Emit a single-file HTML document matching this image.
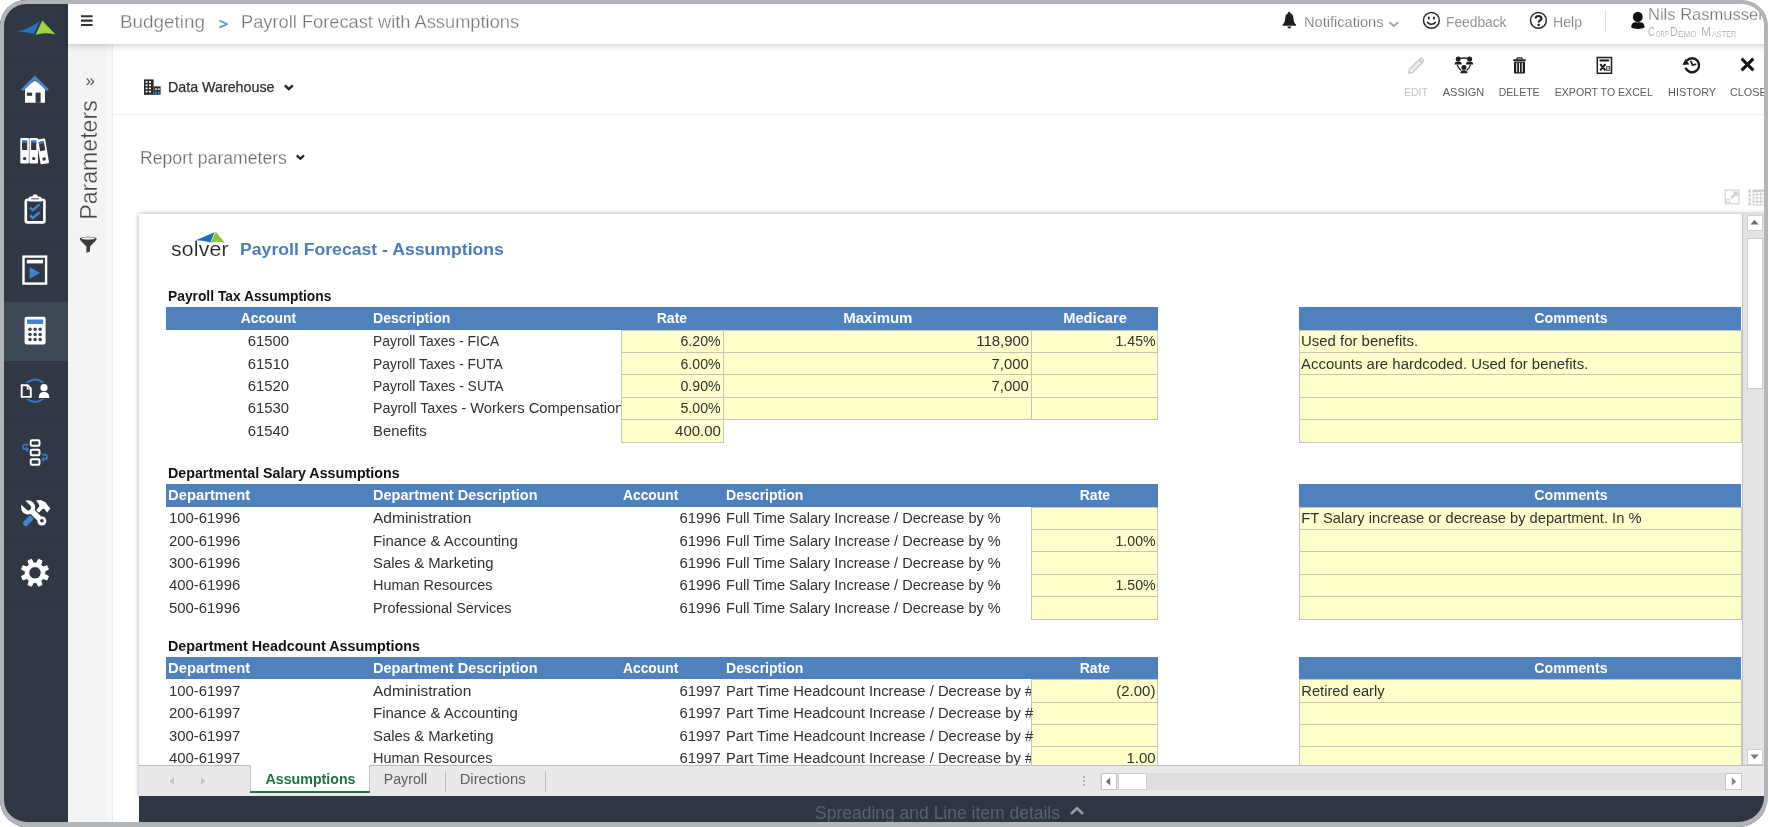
<!DOCTYPE html>
<html><head><meta charset="utf-8"><title>Payroll Forecast with Assumptions</title>
<style>
html,body{margin:0;padding:0}
body{width:1769px;height:827px;overflow:hidden;position:relative;background:#fff;font-family:"Liberation Sans",sans-serif}
.t{position:absolute;white-space:nowrap;display:block}
.b{position:absolute;box-sizing:border-box}
svg{position:absolute;overflow:visible}
#frame{position:absolute;left:0;top:0;width:1768.4px;height:827px;box-sizing:border-box;border:4.4px solid #b2b5ba;border-bottom-width:5.6px;border-radius:26px 26px 30px 27px;box-shadow:0 0 0 40px #fff;z-index:50}
</style></head><body><div id="root" style="position:absolute;left:0;top:0;width:1769px;height:827px;will-change:transform">
<div class="b" style="left:0.0px;top:0.0px;width:67.5px;height:827.0px;background:#2f3844;"></div>
<div class="b" style="left:0.0px;top:301.5px;width:67.5px;height:59.0px;background:#3d4957;"></div>
<div class="b" style="left:4.0px;top:58.5px;width:63.5px;height:1.0px;background:#2c343f;"></div>
<div class="b" style="left:4.0px;top:117.5px;width:63.5px;height:1.0px;background:#2c343f;"></div>
<div class="b" style="left:4.0px;top:178.5px;width:63.5px;height:1.0px;background:#2c343f;"></div>
<div class="b" style="left:4.0px;top:239.5px;width:63.5px;height:1.0px;background:#2c343f;"></div>
<div class="b" style="left:4.0px;top:422.0px;width:63.5px;height:1.0px;background:#2c343f;"></div>
<div class="b" style="left:4.0px;top:482.5px;width:63.5px;height:1.0px;background:#2c343f;"></div>
<div class="b" style="left:4.0px;top:543.0px;width:63.5px;height:1.0px;background:#2c343f;"></div>
<div class="b" style="left:4.0px;top:604.5px;width:63.5px;height:1.0px;background:#2c343f;"></div>
<svg style="left:14px;top:18px" width="44" height="20" viewBox="14 18 44 20">
<path d="M16.2 31.5 C23.5 30.2 32 26.8 40.1 21 L33.6 34.2 C28.5 32.2 22 31.4 16.2 31.5Z" fill="#2273c0"/>
<path d="M42.3 20.4 L55.4 34.5 C49 32.6 42 32.6 35.6 35 Z" fill="#9ed43a"/>
</svg>
<svg style="left:20px;top:74px" width="30" height="30" viewBox="20 74 30 30">
<path d="M25 87.5 L35 80.5 L45 87.5 V102.8 H25Z" fill="#fff"/>
<path d="M22 90.3 L34.8 77.6 L47.8 90.3" fill="none" stroke="#4a86cc" stroke-width="3" stroke-linejoin="miter"/>
<rect x="26.9" y="92.6" width="5.2" height="3.2" fill="#2f3844"/>
<rect x="35.6" y="92.6" width="5" height="10.2" fill="#2f3844"/>
</svg>
<svg style="left:19px;top:136px" width="33" height="30" viewBox="19 136 33 30">
<g fill="#fff"><rect x="20.3" y="138" width="8.6" height="25.5" rx="1"/><rect x="29.4" y="138" width="8.6" height="25.5" rx="1"/>
<rect x="40.6" y="138.6" width="8.6" height="25.2" rx="1" transform="rotate(-9.5 44.9 163.8)"/></g>
<g fill="#2f3844"><rect x="22" y="140.6" width="5.2" height="9.4"/><rect x="31.1" y="140.6" width="5.2" height="9.4"/>
<rect x="42.3" y="141.2" width="5.2" height="9.4" transform="rotate(-9.5 44.9 163.8)"/>
<circle cx="24.6" cy="158.6" r="1.7"/><circle cx="33.7" cy="158.6" r="1.7"/><circle cx="44.9" cy="158.9" r="1.7" transform="rotate(-9.5 44.9 163.8)"/></g>
<g fill="#3b78c0"><rect x="22" y="140.6" width="5.2" height="2.3"/><rect x="31.1" y="140.6" width="5.2" height="2.3"/><rect x="42.3" y="141.2" width="5.2" height="2.3" transform="rotate(-9.5 44.9 163.8)"/></g>
</svg>
<svg style="left:23px;top:192px" width="25" height="33" viewBox="23 192 25 33">
<rect x="25.8" y="199.8" width="18.6" height="22.6" rx="1.6" fill="none" stroke="#fff" stroke-width="2.6"/>
<path d="M28.6 201.6 V198.4 Q28.6 196.6 30.6 196.6 H32.2 A3 3 0 0 1 38 196.6 H39.6 Q41.6 196.6 41.6 198.4 V201.6Z" fill="#fff"/>
<rect x="31" y="198" width="8.2" height="1.5" rx="0.7" fill="#7c8591"/>
<path d="M30 207.6 L32.8 210.2 L39.6 204.4 M30 215.4 L32.8 218 L39.6 212.2" fill="none" stroke="#3f82cf" stroke-width="2.5"/>
</svg>
<svg style="left:21px;top:254px" width="28" height="32" viewBox="21 254 28 32">
<rect x="23.5" y="256.6" width="22.6" height="27" fill="none" stroke="#fff" stroke-width="2.4"/>
<rect x="26.8" y="259.8" width="16.2" height="3.6" fill="#fff"/>
<path d="M29.6 267 L40 272.9 L29.6 278.8Z" fill="#3f82cf"/>
</svg>
<svg style="left:23px;top:315px" width="25" height="31" viewBox="23 315 25 31">
<rect x="24.6" y="316.8" width="21" height="27.6" rx="2" fill="#fff"/>
<rect x="27" y="319.4" width="16.2" height="4.6" rx="0.8" fill="#3f82cf"/>
<g fill="#3a4450"><circle cx="30" cy="329.3" r="1.75"/><circle cx="35.1" cy="329.3" r="1.75"/><circle cx="40.2" cy="329.3" r="1.75"/>
<circle cx="30" cy="334.4" r="1.75"/><circle cx="35.1" cy="334.4" r="1.75"/><circle cx="40.2" cy="334.4" r="1.75"/>
<circle cx="30" cy="339.5" r="1.75"/><circle cx="35.1" cy="339.5" r="1.75"/><circle cx="40.2" cy="339.5" r="1.75"/></g>
</svg>
<svg style="left:19px;top:377px" width="33" height="28" viewBox="19 377 33 28">
<circle cx="35.2" cy="390.7" r="11.2" fill="none" stroke="#3b78c0" stroke-width="2"/>
<rect x="19.5" y="383" width="13.6" height="16" fill="#2f3844"/>
<rect x="37.4" y="383" width="13.6" height="16" fill="#2f3844"/>
<path d="M21.7 385.2 H27.6 L30.8 388.4 V396.9 H21.7Z" fill="none" stroke="#fff" stroke-width="1.9"/>
<path d="M27.3 385.2 V388.8 H30.8" fill="none" stroke="#fff" stroke-width="1.2"/>
<circle cx="44" cy="387.7" r="3.6" fill="#fff"/>
<path d="M38.8 397.9 C38.8 393.6 40.8 392 44 392 C47.2 392 49.3 393.6 49.3 397.9Z" fill="#fff"/>
</svg>
<svg style="left:21px;top:437px" width="28" height="32" viewBox="21 437 28 32">
<g fill="none" stroke="#fff" stroke-width="2"><rect x="30.7" y="440.2" width="8.8" height="5.6" rx="1.3"/><rect x="30.7" y="449.7" width="8.8" height="5.6" rx="1.3"/><rect x="30.7" y="459.2" width="8.8" height="5.6" rx="1.3"/></g>
<g fill="none" stroke="#3b78c0" stroke-width="1.8"><path d="M28.4 444.6 H25.4 A2.3 2.3 0 0 0 25.4 449.2 H26.8"/><path d="M26 447.2 L28.2 449.3 L26 451.4" stroke-width="1.5"/>
<path d="M41.8 454.6 H44.8 A2.3 2.3 0 0 1 44.8 459.2 H43.4"/><path d="M44.2 457.2 L42 459.3 L44.2 461.4" stroke-width="1.5"/></g>
</svg>
<svg style="left:19px;top:497px" width="33" height="31" viewBox="19 497 33 31">
<path d="M42.5 506.5 L31.5 517.5" stroke="#fff" stroke-width="3.6" fill="none"/>
<path d="M31 518 L25.7 523.3" stroke="#3f82cf" stroke-width="5.4" stroke-linecap="round" fill="none"/>
<path d="M35.9 500.6 L40.6 500.1 L45.5 502.2 L47.9 505.8 L50.4 508.5 L47.1 512.6 L44.1 508.8 L42.2 509 L38.9 511.8 L36.8 509.3 L39.5 506.3 L38.4 503.6Z" fill="#fff"/>
<circle cx="28.1" cy="507.4" r="8.1" fill="#2f3844"/>
<path d="M30 509.5 L41.9 521" stroke="#2f3844" stroke-width="7.6" stroke-linecap="round" fill="none"/>
<circle cx="41.9" cy="521" r="5.4" fill="#2f3844"/>
<circle cx="28.1" cy="507.4" r="7.1" fill="#fff"/>
<path d="M30 509.5 L41.9 521" stroke="#fff" stroke-width="5.6" fill="none"/>
<circle cx="41.9" cy="521" r="4.5" fill="#fff"/>
<circle cx="41.9" cy="520.8" r="1.8" fill="#2f3844"/>
<path d="M28.3 507.6 L18.6 497.9" stroke="#2f3844" stroke-width="5.6" stroke-linecap="round" fill="none"/>
</svg>
<svg style="left:20px;top:557px" width="30" height="30" viewBox="20 557 30 30"><path d="M36.63 563.03 L38.46 559.34 L42.08 560.84 L40.76 564.75 L43.05 567.04 L46.96 565.72 L48.46 569.34 L44.77 571.17 L44.77 574.43 L48.46 576.26 L46.96 579.88 L43.05 578.56 L40.76 580.85 L42.08 584.76 L38.46 586.26 L36.63 582.57 L33.37 582.57 L31.54 586.26 L27.92 584.76 L29.24 580.85 L26.95 578.56 L23.04 579.88 L21.54 576.26 L25.23 574.43 L25.23 571.17 L21.54 569.34 L23.04 565.72 L26.95 567.04 L29.24 564.75 L27.92 560.84 L31.54 559.34 L33.37 563.03Z M41.20 572.80 A6.2 6.2 0 1 0 28.80 572.80 A6.2 6.2 0 1 0 41.20 572.80Z" fill="#fff" fill-rule="evenodd" stroke="#fff" stroke-width="1.0" stroke-linejoin="round"/></svg>
<div class="b" style="left:67.5px;top:44.0px;width:45.5px;height:783.0px;background:#f4f4f4;border-right:1px solid #ececec"></div>
<div class="b" style="left:106.5px;top:44.0px;width:5.5px;height:783.0px;background:#f8f8f8;"></div>
<span class="t" style="left:85.5px;transform-origin:0 50%;top:69.5px;font-size:17px;line-height:22.1px;color:#555;">»</span>
<span class="t" style="left:89px;top:160px;font-size:23.1px;line-height:26px;color:#444;-webkit-text-stroke:0.3px #f4f4f4;transform:translate(-50%,-50%) rotate(-90deg) scaleX(1.0)">Parameters</span>
<svg style="left:79px;top:235px" width="19" height="19" viewBox="79 235 19 19">
<path d="M79.8 238.7 C79.8 236 96.7 236 96.7 238.7 C96.7 240.2 93.6 242.4 90 246.6 V251.6 L86.4 252.7 V246.6 C82.8 242.4 79.8 240.2 79.8 238.7Z" fill="#3a3a3a"/>
<ellipse cx="88.25" cy="238.4" rx="6.7" ry="1.1" fill="#f6f6f6"/></svg>
<div class="b" style="left:113.0px;top:44.0px;width:1656.0px;height:783.0px;background:#fff;"></div>
<div class="b" style="left:113.0px;top:114.2px;width:1656.0px;height:1.0px;background:#efefef;"></div>
<div class="b" style="left:67.5px;top:0.0px;width:1701.5px;height:44.3px;background:#fff;box-shadow:0 1px 7px rgba(0,0,0,.24);z-index:5"></div>
<div style="position:absolute;left:0;top:0;z-index:6">
<svg style="left:81.4px;top:15.4px" width="12" height="12" viewBox="0 0 12 12"><path d="M0 1.2H11.6M0 5.6H11.6M0 10H11.6" stroke="#333" stroke-width="2.1"/></svg>
<span class="t" style="left:120.0px;transform-origin:0 50%;top:10.4px;font-size:18.4px;line-height:23.9px;color:#737373;transform:scaleX(1.026);-webkit-text-stroke:0.3px #fff;">Budgeting</span>
<span class="t" style="left:218.6px;transform-origin:0 50%;top:14.1px;font-size:15.5px;line-height:20.2px;color:#3d8edb;transform:scaleX(0.993);-webkit-text-stroke:0.5px #3d8edb;">&gt;</span>
<span class="t" style="left:241.0px;transform-origin:0 50%;top:10.4px;font-size:18.4px;line-height:23.9px;color:#737373;transform:scaleX(0.993);-webkit-text-stroke:0.3px #fff;">Payroll Forecast with Assumptions</span>
<svg style="left:1282px;top:11px" width="15" height="19" viewBox="0 0 15 19">
<path d="M7.2 0.8 C8 0.8 8.5 1.5 8.3 2.3 C10.6 3 11.4 5.2 11.5 7.8 C11.6 10.8 12.4 12.4 14 13.6 V14.8 H0.6 V13.6 C2.2 12.4 3 10.8 3.1 7.8 C3.2 5.2 4 3 6.1 2.3 C5.9 1.5 6.4 0.8 7.2 0.8Z" fill="#1f1f1f"/>
<path d="M5.4 15.6 H9.2 A1.9 1.9 0 0 1 5.4 15.6Z" fill="#1f1f1f"/></svg>
<span class="t" style="left:1304.0px;transform-origin:0 50%;top:12.9px;font-size:14.6px;line-height:19.0px;color:#6c6c6c;-webkit-text-stroke:0.25px #fff;">Notifications</span>
<svg style="left:1388px;top:21px" width="12" height="8" viewBox="0 0 12 8"><path d="M1.4 1.2 L5.8 5 L10.2 1.2" fill="none" stroke="#a4a4a4" stroke-width="1.9"/></svg>
<svg style="left:1422px;top:11px" width="19" height="19" viewBox="0 0 19 19">
<circle cx="9.4" cy="9.4" r="7.9" fill="none" stroke="#2b2b2b" stroke-width="1.5"/>
<ellipse cx="6.8" cy="7" rx="1.05" ry="1.5" fill="#1f1f1f"/><ellipse cx="12" cy="7" rx="1.05" ry="1.5" fill="#1f1f1f"/>
<path d="M5.2 10.8 C6.6 14 12.2 14 13.6 10.8" fill="none" stroke="#1f1f1f" stroke-width="1.5"/></svg>
<span class="t" style="left:1446.0px;transform-origin:0 50%;top:12.9px;font-size:14.6px;line-height:19.0px;color:#6c6c6c;transform:scaleX(0.944);-webkit-text-stroke:0.25px #fff;">Feedback</span>
<svg style="left:1529px;top:11px" width="19" height="19" viewBox="0 0 19 19">
<circle cx="9.4" cy="9.4" r="7.9" fill="none" stroke="#2b2b2b" stroke-width="1.5"/>
<path d="M6.6 7.4 C6.6 4.2 12.4 4.2 12.4 7.4 C12.4 9.4 9.6 9.2 9.6 11.6" fill="none" stroke="#1f1f1f" stroke-width="2.1"/>
<circle cx="9.6" cy="14" r="1.25" fill="#1f1f1f"/></svg>
<span class="t" style="left:1553.0px;transform-origin:0 50%;top:12.9px;font-size:14.6px;line-height:19.0px;color:#6c6c6c;transform:scaleX(0.966);-webkit-text-stroke:0.25px #fff;">Help</span>
<div class="b" style="left:1605.0px;top:10.0px;width:1.0px;height:22.0px;background:#dcdcdc;"></div>
<svg style="left:1630px;top:11px" width="16" height="19" viewBox="1630 11 16 19">
<ellipse cx="1637.8" cy="16.9" rx="4.9" ry="5.2" fill="#111"/>
<path d="M1631.2 27.6 C1631.2 23.4 1633.6 21.6 1637.8 22.6 C1642 21.6 1644.6 23.4 1644.6 27.6 C1642 29.4 1633.8 29.4 1631.2 27.6Z" fill="#111"/></svg>
<span class="t" style="left:1648.0px;transform-origin:0 50%;top:5.3px;font-size:16px;line-height:20.8px;color:#6e6e6e;transform:scaleX(1.034);-webkit-text-stroke:0.28px #fff;">Nils Rasmussen</span>
<span class="t" style="left:1648.2px;transform-origin:0 50%;top:25.4px;font-size:12.2px;line-height:15.9px;color:#ababab;transform:scaleX(0.772);-webkit-text-stroke:0.12px #fff;">C</span>
<span class="t" style="left:1655.6px;transform-origin:0 50%;top:29.0px;font-size:8.6px;line-height:11.2px;color:#ababab;transform:scaleX(0.687);-webkit-text-stroke:0.12px #fff;">ORP</span>
<span class="t" style="left:1669.7px;transform-origin:0 50%;top:25.4px;font-size:12.2px;line-height:15.9px;color:#ababab;transform:scaleX(0.862);-webkit-text-stroke:0.12px #fff;">D</span>
<span class="t" style="left:1678.2px;transform-origin:0 50%;top:29.0px;font-size:8.6px;line-height:11.2px;color:#ababab;transform:scaleX(0.945);-webkit-text-stroke:0.12px #fff;">EMO</span>
<span class="t" style="left:1701.3px;transform-origin:0 50%;top:25.4px;font-size:12.2px;line-height:15.9px;color:#ababab;transform:scaleX(0.994);-webkit-text-stroke:0.12px #fff;">M</span>
<span class="t" style="left:1712.0px;transform-origin:0 50%;top:29.0px;font-size:8.6px;line-height:11.2px;color:#ababab;transform:scaleX(0.848);-webkit-text-stroke:0.12px #fff;">ASTER</span>
</div>
<svg style="left:143px;top:78px" width="19" height="19" viewBox="0 0 19 19">
<path d="M1 1.4 H10.6 V16.8 H1Z" fill="#2b2b2b"/>
<path d="M10.6 8.4 H17.6 V16.8 H10.6Z" fill="#2b2b2b"/>
<g fill="#fff"><rect x="2.6" y="3.2" width="2" height="1.6"/><rect x="6" y="3.2" width="2" height="1.6"/><rect x="2.6" y="6.4" width="2" height="1.6"/><rect x="6" y="6.4" width="2" height="1.6"/>
<rect x="2.6" y="9.6" width="2" height="1.6"/><rect x="6" y="9.6" width="2" height="1.6"/><rect x="2.6" y="12.8" width="2" height="1.6"/><rect x="6" y="12.8" width="2" height="1.6"/>
<rect x="12" y="10.4" width="1.8" height="1.5"/><rect x="14.8" y="10.4" width="1.8" height="1.5"/></g>
<rect x="11.8" y="13.4" width="2" height="3.4" fill="#3b78c0"/><rect x="14.8" y="13.4" width="2" height="3.4" fill="#3b78c0"/>
</svg>
<span class="t" style="left:168.0px;transform-origin:0 50%;top:77.8px;font-size:14.2px;line-height:18.5px;color:#2e2e2e;transform:scaleX(1.005);-webkit-text-stroke:0.25px #2e2e2e;">Data Warehouse</span>
<svg style="left:283px;top:84px" width="12" height="8" viewBox="0 0 12 8"><path d="M1.8 1.4 L5.8 5.2 L9.8 1.4" fill="none" stroke="#222" stroke-width="2.3"/></svg>
<span class="t" style="left:1403.0px;transform-origin:50% 50%;top:84.6px;font-size:11.4px;line-height:14.8px;color:#c4c4c4;transform:scaleX(0.925);">EDIT</span>
<span class="t" style="left:1442.0px;transform-origin:50% 50%;top:84.6px;font-size:11.4px;line-height:14.8px;color:#5b5b5b;transform:scaleX(0.964);">ASSIGN</span>
<span class="t" style="left:1497.3px;transform-origin:50% 50%;top:84.6px;font-size:11.4px;line-height:14.8px;color:#5b5b5b;transform:scaleX(0.925);">DELETE</span>
<span class="t" style="left:1551.2px;transform-origin:50% 50%;top:84.6px;font-size:11.4px;line-height:14.8px;color:#5b5b5b;transform:scaleX(0.929);">EXPORT TO EXCEL</span>
<span class="t" style="left:1666.9px;transform-origin:50% 50%;top:84.6px;font-size:11.4px;line-height:14.8px;color:#5b5b5b;transform:scaleX(0.956);">HISTORY</span>
<span class="t" style="left:1729.0px;transform-origin:50% 50%;top:84.6px;font-size:11.4px;line-height:14.8px;color:#5b5b5b;transform:scaleX(0.948);">CLOSE</span>
<svg style="left:1407px;top:57px" width="18" height="18" viewBox="0 0 18 18">
<path d="M2.4 12.2 L11.6 3 L14.8 6.2 L5.6 15.4 L1.6 16.2Z M12.4 2.2 L13.4 1.2 Q14.2 0.6 15 1.4 L16.4 2.8 Q17 3.6 16.4 4.4 L15.6 5.4Z" fill="#f4f4f4" stroke="#c6c6c6" stroke-width="1.2"/>
<path d="M4.2 12.2 L11.6 4.8 M5.8 13.8 L13.2 6.4" stroke="#d2d2d2" stroke-width="0.9"/></svg>
<svg style="left:1454px;top:56px" width="20" height="19" viewBox="0 0 20 19">
<g fill="#1d1d1d"><circle cx="4.2" cy="3" r="2.5"/><circle cx="15.6" cy="3" r="2.5"/><circle cx="9.9" cy="11.6" r="2.5"/>
<path d="M0.6 8.6 C0.6 6.2 2 5.6 4.2 5.6 C6.4 5.6 7.8 6.2 7.8 8.6Z"/><path d="M12 8.6 C12 6.2 13.4 5.6 15.6 5.6 C17.8 5.6 19.2 6.2 19.2 8.6Z"/>
<path d="M6.3 17.3 C6.3 14.9 7.7 14.2 9.9 14.2 C12.1 14.2 13.5 14.9 13.5 17.3Z"/></g>
<path d="M6 2.4 Q9.9 1.6 13.8 2.4 M3.2 8.8 Q4.4 12.4 7.2 14.4 M16.6 8.8 Q15.4 12.4 12.6 14.4" stroke="#1d1d1d" stroke-width="1.3" fill="none"/></svg>
<svg style="left:1512px;top:57px" width="15" height="18" viewBox="0 0 15 18">
<path d="M5 2.4 V1.4 Q5 0.8 5.8 0.8 H9.2 Q10 0.8 10 1.4 V2.4" fill="none" stroke="#1d1d1d" stroke-width="1.3"/>
<rect x="1.2" y="2.2" width="12.6" height="2" rx="0.6" fill="#1d1d1d"/>
<path d="M2 4.8 H13 V15.4 Q13 16.6 11.8 16.6 H3.2 Q2 16.6 2 15.4Z" fill="#1d1d1d"/>
<path d="M4.7 5.8 V15.2 M7.5 5.8 V15.2 M10.3 5.8 V15.2" stroke="#e8e8e8" stroke-width="1.1"/></svg>
<svg style="left:1596px;top:56px" width="17" height="19" viewBox="0 0 17 19">
<rect x="1.3" y="1.5" width="14.2" height="15.8" fill="#fff" stroke="#1d1d1d" stroke-width="1.5"/>
<rect x="3.6" y="3.4" width="9.6" height="2.1" fill="#1d1d1d"/>
<path d="M4.2 8.2 L9.4 14.4 M9.4 8.2 L4.2 14.4" stroke="#1d1d1d" stroke-width="2.1"/>
<rect x="10.6" y="10.6" width="3.2" height="3.8" fill="#bbb" stroke="#333" stroke-width="0.8"/></svg>
<svg style="left:1682px;top:55px" width="20" height="20" viewBox="0 0 20 20">
<path d="M4.9 5.6 A7 7 0 1 1 3.5 12.6" fill="none" stroke="#1d1d1d" stroke-width="2.4"/>
<path d="M0.4 10 L7.4 9.4 L3.6 3.8Z" fill="#1d1d1d"/>
<path d="M8.6 5.8 L10.6 10.2 L14.4 9" fill="none" stroke="#1d1d1d" stroke-width="1.7"/></svg>
<svg style="left:1740px;top:57px" width="15" height="15" viewBox="0 0 15 15"><path d="M1.6 1.6 L13.4 13.4 M13.4 1.6 L1.6 13.4" stroke="#111" stroke-width="3"/></svg>
<span class="t" style="left:140.0px;transform-origin:0 50%;top:146.7px;font-size:18px;line-height:23.4px;color:#606060;transform:scaleX(0.979);-webkit-text-stroke:0.3px #fff;">Report parameters</span>
<svg style="left:295px;top:154px" width="11" height="8" viewBox="0 0 11 8"><path d="M1.8 1.4 L5.4 4.8 L9 1.4" fill="none" stroke="#222" stroke-width="2.2"/></svg>
<svg style="left:1724px;top:189px" width="16" height="16" viewBox="0 0 16 16">
<rect x="1.2" y="1.2" width="13.6" height="13.6" fill="none" stroke="#d6d6d6" stroke-width="1.3"/>
<path d="M7.4 8.8 L11.4 4.8" stroke="#cfcfcf" stroke-width="2.6"/>
<path d="M8.4 2.6 H13.6 V7.8Z" fill="#cfcfcf"/>
<rect x="2.6" y="10.2" width="3.2" height="3.2" fill="none" stroke="#d6d6d6" stroke-width="1"/></svg>
<svg style="left:1748px;top:188.5px" width="18" height="17" viewBox="0 0 18 17">
<path d="M1.6 0.6 V16.4" stroke="#cdcdcd" stroke-width="2.3" stroke-dasharray="3.2 1"/>
<rect x="4.6" y="0.6" width="13.4" height="2.2" fill="#c9c9c9"/>
<path d="M4.6 5.4 H18 M4.6 9 H18 M4.6 12.6 H18 M4.6 16 H18 M5.2 2 V16 M9 3 V16 M12.8 3 V16 M16.6 3 V16" stroke="#d2d2d2" stroke-width="1.2" fill="none"/></svg>
<div class="b" style="left:139.0px;top:214.0px;width:1626.0px;height:583.0px;background:#fff;box-shadow:0 0 5px rgba(0,0,0,.34);overflow:hidden"></div>
<div style="position:absolute;left:0;top:0;width:1765px;height:766px;overflow:hidden">
<svg style="left:194px;top:230.3px" width="32" height="14" viewBox="192 230 32 14">
<path d="M193.2 240.6 L212.6 232.2 L208.4 242.6 C203.6 241 198.4 240.4 193.2 240.6Z" fill="#1f6fb8"/>
<path d="M213.8 231.8 L222.8 242.8 C218 241.4 213.2 241.4 208.6 242.8 Z" fill="#8cc63f"/></svg>
<span class="t" style="left:170.8px;transform-origin:0 50%;top:236.8px;font-size:19.5px;line-height:25.4px;color:#1e1e1e;transform:scaleX(1.088);letter-spacing:0.2px;-webkit-text-stroke:0.15px #fff;">solver</span>
<span class="t" style="left:240.0px;transform-origin:0 50%;top:237.8px;font-size:17.2px;line-height:22.4px;color:#4a7dbd;font-weight:bold;transform:scaleX(1.026);">Payroll Forecast - Assumptions</span>
<span class="t" style="left:168.3px;transform-origin:0 50%;top:286.9px;font-size:14.7px;line-height:19.1px;color:#111;font-weight:bold;transform:scaleX(0.940);">Payroll Tax Assumptions</span>
<div class="b" style="left:166.0px;top:306.7px;width:991.6px;height:23.0px;background:#4f81bd;"></div>
<div class="b" style="left:1299.0px;top:306.7px;width:442.0px;height:23.0px;background:#4f81bd;"></div>
<span class="t" style="left:239.1px;transform-origin:50% 50%;top:309.2px;font-size:14.7px;line-height:19.1px;color:#fff;font-weight:bold;transform:scaleX(0.941);">Account</span>
<span class="t" style="left:372.5px;transform-origin:0 50%;top:309.2px;font-size:14.7px;line-height:19.1px;color:#fff;font-weight:bold;transform:scaleX(0.958);">Description</span>
<span class="t" style="left:656.4px;transform-origin:50% 50%;top:309.2px;font-size:14.7px;line-height:19.1px;color:#fff;font-weight:bold;transform:scaleX(0.958);">Rate</span>
<span class="t" style="left:843.6px;transform-origin:50% 50%;top:309.2px;font-size:14.7px;line-height:19.1px;color:#fff;font-weight:bold;transform:scaleX(1.021);">Maximum</span>
<span class="t" style="left:1063.2px;transform-origin:50% 50%;top:309.2px;font-size:14.7px;line-height:19.1px;color:#fff;font-weight:bold;">Medicare</span>
<span class="t" style="left:1533.0px;transform-origin:50% 50%;top:309.2px;font-size:14.7px;line-height:19.1px;color:#fff;font-weight:bold;transform:scaleX(0.968);">Comments</span>
<span class="t" style="left:248.1px;transform-origin:50% 50%;top:332.2px;font-size:14.7px;line-height:19.1px;color:#303030;transform:scaleX(1.014);">61500</span>
<span class="t" style="left:372.5px;transform-origin:0 50%;top:332.2px;font-size:14.7px;line-height:19.1px;color:#303030;transform:scaleX(0.945);">Payroll Taxes - FICA</span>
<div class="b" style="left:621.4px;top:329.6px;width:102.6px;height:23.4px;background:#ffffcc;border:1px solid #c5c5b9"></div>
<span class="t" style="left:678.8px;transform-origin:100% 50%;top:332.2px;font-size:14.7px;line-height:19.1px;color:#303030;transform:scaleX(0.965);">6.20%</span>
<div class="b" style="left:723.0px;top:329.6px;width:309.0px;height:23.4px;background:#ffffcc;border:1px solid #c5c5b9"></div>
<span class="t" style="left:976.6px;transform-origin:100% 50%;top:332.2px;font-size:14.7px;line-height:19.1px;color:#303030;transform:scaleX(1.015);">118,900</span>
<div class="b" style="left:1031.0px;top:329.6px;width:126.6px;height:23.4px;background:#ffffcc;border:1px solid #c5c5b9"></div>
<span class="t" style="left:1113.5px;transform-origin:100% 50%;top:332.2px;font-size:14.7px;line-height:19.1px;color:#303030;transform:scaleX(0.965);">1.45%</span>
<div class="b" style="left:1299.0px;top:329.6px;width:443.0px;height:23.4px;background:#ffffcc;border:1px solid #c5c5b9"></div>
<span class="t" style="left:1301.3px;transform-origin:0 50%;top:332.2px;font-size:14.7px;line-height:19.1px;color:#303030;transform:scaleX(1.017);">Used for benefits.</span>
<span class="t" style="left:248.1px;transform-origin:50% 50%;top:354.6px;font-size:14.7px;line-height:19.1px;color:#303030;transform:scaleX(1.014);">61510</span>
<span class="t" style="left:372.5px;transform-origin:0 50%;top:354.6px;font-size:14.7px;line-height:19.1px;color:#303030;transform:scaleX(0.945);">Payroll Taxes - FUTA</span>
<div class="b" style="left:621.4px;top:352.0px;width:102.6px;height:23.4px;background:#ffffcc;border:1px solid #c5c5b9"></div>
<span class="t" style="left:678.8px;transform-origin:100% 50%;top:354.6px;font-size:14.7px;line-height:19.1px;color:#303030;transform:scaleX(0.965);">6.00%</span>
<div class="b" style="left:723.0px;top:352.0px;width:309.0px;height:23.4px;background:#ffffcc;border:1px solid #c5c5b9"></div>
<span class="t" style="left:991.8px;transform-origin:100% 50%;top:354.6px;font-size:14.7px;line-height:19.1px;color:#303030;transform:scaleX(1.015);">7,000</span>
<div class="b" style="left:1031.0px;top:352.0px;width:126.6px;height:23.4px;background:#ffffcc;border:1px solid #c5c5b9"></div>
<div class="b" style="left:1299.0px;top:352.0px;width:443.0px;height:23.4px;background:#ffffcc;border:1px solid #c5c5b9"></div>
<span class="t" style="left:1301.3px;transform-origin:0 50%;top:354.6px;font-size:14.7px;line-height:19.1px;color:#303030;transform:scaleX(1.017);">Accounts are hardcoded. Used for benefits.</span>
<span class="t" style="left:248.1px;transform-origin:50% 50%;top:376.9px;font-size:14.7px;line-height:19.1px;color:#303030;transform:scaleX(1.014);">61520</span>
<span class="t" style="left:372.5px;transform-origin:0 50%;top:376.9px;font-size:14.7px;line-height:19.1px;color:#303030;transform:scaleX(0.945);">Payroll Taxes - SUTA</span>
<div class="b" style="left:621.4px;top:374.4px;width:102.6px;height:23.4px;background:#ffffcc;border:1px solid #c5c5b9"></div>
<span class="t" style="left:678.8px;transform-origin:100% 50%;top:376.9px;font-size:14.7px;line-height:19.1px;color:#303030;transform:scaleX(0.965);">0.90%</span>
<div class="b" style="left:723.0px;top:374.4px;width:309.0px;height:23.4px;background:#ffffcc;border:1px solid #c5c5b9"></div>
<span class="t" style="left:991.8px;transform-origin:100% 50%;top:376.9px;font-size:14.7px;line-height:19.1px;color:#303030;transform:scaleX(1.015);">7,000</span>
<div class="b" style="left:1031.0px;top:374.4px;width:126.6px;height:23.4px;background:#ffffcc;border:1px solid #c5c5b9"></div>
<div class="b" style="left:1299.0px;top:374.4px;width:443.0px;height:23.4px;background:#ffffcc;border:1px solid #c5c5b9"></div>
<span class="t" style="left:248.1px;transform-origin:50% 50%;top:399.3px;font-size:14.7px;line-height:19.1px;color:#303030;transform:scaleX(1.014);">61530</span>
<span class="t" style="left:372.5px;transform-origin:0 50%;top:399.3px;font-size:14.7px;line-height:19.1px;color:#303030;transform:scaleX(0.970);">Payroll Taxes -</span>
<span class="t" style="left:470.2px;transform-origin:0 50%;top:399.3px;font-size:14.7px;line-height:19.1px;color:#303030;">Workers Compensation</span>
<div class="b" style="left:621.4px;top:396.8px;width:102.6px;height:23.4px;background:#ffffcc;border:1px solid #c5c5b9"></div>
<span class="t" style="left:678.8px;transform-origin:100% 50%;top:399.3px;font-size:14.7px;line-height:19.1px;color:#303030;transform:scaleX(0.965);">5.00%</span>
<div class="b" style="left:723.0px;top:396.8px;width:309.0px;height:23.4px;background:#ffffcc;border:1px solid #c5c5b9"></div>
<div class="b" style="left:1031.0px;top:396.8px;width:126.6px;height:23.4px;background:#ffffcc;border:1px solid #c5c5b9"></div>
<div class="b" style="left:1299.0px;top:396.8px;width:443.0px;height:23.4px;background:#ffffcc;border:1px solid #c5c5b9"></div>
<span class="t" style="left:248.1px;transform-origin:50% 50%;top:421.7px;font-size:14.7px;line-height:19.1px;color:#303030;transform:scaleX(1.014);">61540</span>
<span class="t" style="left:372.5px;transform-origin:0 50%;top:421.7px;font-size:14.7px;line-height:19.1px;color:#303030;transform:scaleX(1.010);">Benefits</span>
<div class="b" style="left:621.4px;top:419.2px;width:102.6px;height:23.4px;background:#ffffcc;border:1px solid #c5c5b9"></div>
<span class="t" style="left:675.6px;transform-origin:100% 50%;top:421.7px;font-size:14.7px;line-height:19.1px;color:#303030;transform:scaleX(1.020);">400.00</span>
<div class="b" style="left:1299.0px;top:419.2px;width:443.0px;height:23.4px;background:#ffffcc;border:1px solid #c5c5b9"></div>
<span class="t" style="left:168.3px;transform-origin:0 50%;top:464.1px;font-size:14.7px;line-height:19.1px;color:#111;font-weight:bold;transform:scaleX(0.971);">Departmental Salary Assumptions</span>
<div class="b" style="left:166.0px;top:483.9px;width:991.6px;height:22.8px;background:#4f81bd;"></div>
<div class="b" style="left:1299.0px;top:483.9px;width:442.0px;height:22.8px;background:#4f81bd;"></div>
<span class="t" style="left:168.3px;transform-origin:0 50%;top:486.4px;font-size:14.7px;line-height:19.1px;color:#fff;font-weight:bold;transform:scaleX(1.006);">Department</span>
<span class="t" style="left:372.5px;transform-origin:0 50%;top:486.4px;font-size:14.7px;line-height:19.1px;color:#fff;font-weight:bold;transform:scaleX(0.988);">Department Description</span>
<span class="t" style="left:623.3px;transform-origin:0 50%;top:486.4px;font-size:14.7px;line-height:19.1px;color:#fff;font-weight:bold;transform:scaleX(0.941);">Account</span>
<span class="t" style="left:725.5px;transform-origin:0 50%;top:486.4px;font-size:14.7px;line-height:19.1px;color:#fff;font-weight:bold;transform:scaleX(0.958);">Description</span>
<span class="t" style="left:1079.1px;transform-origin:50% 50%;top:486.4px;font-size:14.7px;line-height:19.1px;color:#fff;font-weight:bold;transform:scaleX(0.958);">Rate</span>
<span class="t" style="left:1533.0px;transform-origin:50% 50%;top:486.4px;font-size:14.7px;line-height:19.1px;color:#fff;font-weight:bold;transform:scaleX(0.968);">Comments</span>
<span class="t" style="left:168.6px;transform-origin:0 50%;top:509.2px;font-size:14.7px;line-height:19.1px;color:#303030;transform:scaleX(1.014);">100-61996</span>
<span class="t" style="left:372.5px;transform-origin:0 50%;top:509.2px;font-size:14.7px;line-height:19.1px;color:#303030;transform:scaleX(1.057);">Administration</span>
<span class="t" style="left:680.2px;transform-origin:100% 50%;top:509.2px;font-size:14.7px;line-height:19.1px;color:#303030;transform:scaleX(1.014);">61996</span>
<span class="t" style="left:725.5px;transform-origin:0 50%;top:509.2px;font-size:14.7px;line-height:19.1px;color:#303030;transform:scaleX(0.990);">Full Time Salary Increase / Decrease by %</span>
<div class="b" style="left:1031.0px;top:506.6px;width:126.6px;height:23.4px;background:#ffffcc;border:1px solid #c5c5b9"></div>
<div class="b" style="left:1299.0px;top:506.6px;width:443.0px;height:23.4px;background:#ffffcc;border:1px solid #c5c5b9"></div>
<span class="t" style="left:1301.3px;transform-origin:0 50%;top:509.2px;font-size:14.7px;line-height:19.1px;color:#303030;">FT Salary increase or decrease by department. In %</span>
<span class="t" style="left:168.6px;transform-origin:0 50%;top:531.6px;font-size:14.7px;line-height:19.1px;color:#303030;transform:scaleX(1.014);">200-61996</span>
<span class="t" style="left:372.5px;transform-origin:0 50%;top:531.6px;font-size:14.7px;line-height:19.1px;color:#303030;transform:scaleX(1.019);">Finance &amp; Accounting</span>
<span class="t" style="left:680.2px;transform-origin:100% 50%;top:531.6px;font-size:14.7px;line-height:19.1px;color:#303030;transform:scaleX(1.014);">61996</span>
<span class="t" style="left:725.5px;transform-origin:0 50%;top:531.6px;font-size:14.7px;line-height:19.1px;color:#303030;transform:scaleX(0.990);">Full Time Salary Increase / Decrease by %</span>
<div class="b" style="left:1031.0px;top:529.0px;width:126.6px;height:23.4px;background:#ffffcc;border:1px solid #c5c5b9"></div>
<span class="t" style="left:1113.5px;transform-origin:100% 50%;top:531.6px;font-size:14.7px;line-height:19.1px;color:#303030;transform:scaleX(0.965);">1.00%</span>
<div class="b" style="left:1299.0px;top:529.0px;width:443.0px;height:23.4px;background:#ffffcc;border:1px solid #c5c5b9"></div>
<span class="t" style="left:168.6px;transform-origin:0 50%;top:554.0px;font-size:14.7px;line-height:19.1px;color:#303030;transform:scaleX(1.014);">300-61996</span>
<span class="t" style="left:372.5px;transform-origin:0 50%;top:554.0px;font-size:14.7px;line-height:19.1px;color:#303030;transform:scaleX(1.010);">Sales &amp; Marketing</span>
<span class="t" style="left:680.2px;transform-origin:100% 50%;top:554.0px;font-size:14.7px;line-height:19.1px;color:#303030;transform:scaleX(1.014);">61996</span>
<span class="t" style="left:725.5px;transform-origin:0 50%;top:554.0px;font-size:14.7px;line-height:19.1px;color:#303030;transform:scaleX(0.990);">Full Time Salary Increase / Decrease by %</span>
<div class="b" style="left:1031.0px;top:551.4px;width:126.6px;height:23.4px;background:#ffffcc;border:1px solid #c5c5b9"></div>
<div class="b" style="left:1299.0px;top:551.4px;width:443.0px;height:23.4px;background:#ffffcc;border:1px solid #c5c5b9"></div>
<span class="t" style="left:168.6px;transform-origin:0 50%;top:576.4px;font-size:14.7px;line-height:19.1px;color:#303030;transform:scaleX(1.014);">400-61996</span>
<span class="t" style="left:372.5px;transform-origin:0 50%;top:576.4px;font-size:14.7px;line-height:19.1px;color:#303030;transform:scaleX(0.982);">Human Resources</span>
<span class="t" style="left:680.2px;transform-origin:100% 50%;top:576.4px;font-size:14.7px;line-height:19.1px;color:#303030;transform:scaleX(1.014);">61996</span>
<span class="t" style="left:725.5px;transform-origin:0 50%;top:576.4px;font-size:14.7px;line-height:19.1px;color:#303030;transform:scaleX(0.990);">Full Time Salary Increase / Decrease by %</span>
<div class="b" style="left:1031.0px;top:573.8px;width:126.6px;height:23.4px;background:#ffffcc;border:1px solid #c5c5b9"></div>
<span class="t" style="left:1113.5px;transform-origin:100% 50%;top:576.4px;font-size:14.7px;line-height:19.1px;color:#303030;transform:scaleX(0.965);">1.50%</span>
<div class="b" style="left:1299.0px;top:573.8px;width:443.0px;height:23.4px;background:#ffffcc;border:1px solid #c5c5b9"></div>
<span class="t" style="left:168.6px;transform-origin:0 50%;top:598.8px;font-size:14.7px;line-height:19.1px;color:#303030;transform:scaleX(1.014);">500-61996</span>
<span class="t" style="left:372.5px;transform-origin:0 50%;top:598.8px;font-size:14.7px;line-height:19.1px;color:#303030;transform:scaleX(0.980);">Professional Services</span>
<span class="t" style="left:680.2px;transform-origin:100% 50%;top:598.8px;font-size:14.7px;line-height:19.1px;color:#303030;transform:scaleX(1.014);">61996</span>
<span class="t" style="left:725.5px;transform-origin:0 50%;top:598.8px;font-size:14.7px;line-height:19.1px;color:#303030;transform:scaleX(0.990);">Full Time Salary Increase / Decrease by %</span>
<div class="b" style="left:1031.0px;top:596.2px;width:126.6px;height:23.4px;background:#ffffcc;border:1px solid #c5c5b9"></div>
<div class="b" style="left:1299.0px;top:596.2px;width:443.0px;height:23.4px;background:#ffffcc;border:1px solid #c5c5b9"></div>
<span class="t" style="left:168.3px;transform-origin:0 50%;top:636.7px;font-size:14.7px;line-height:19.1px;color:#111;font-weight:bold;transform:scaleX(0.976);">Department Headcount Assumptions</span>
<div class="b" style="left:166.0px;top:656.5px;width:991.6px;height:22.8px;background:#4f81bd;"></div>
<div class="b" style="left:1299.0px;top:656.5px;width:442.0px;height:22.8px;background:#4f81bd;"></div>
<span class="t" style="left:168.3px;transform-origin:0 50%;top:659.1px;font-size:14.7px;line-height:19.1px;color:#fff;font-weight:bold;transform:scaleX(1.006);">Department</span>
<span class="t" style="left:372.5px;transform-origin:0 50%;top:659.1px;font-size:14.7px;line-height:19.1px;color:#fff;font-weight:bold;transform:scaleX(0.988);">Department Description</span>
<span class="t" style="left:623.3px;transform-origin:0 50%;top:659.1px;font-size:14.7px;line-height:19.1px;color:#fff;font-weight:bold;transform:scaleX(0.941);">Account</span>
<span class="t" style="left:725.5px;transform-origin:0 50%;top:659.1px;font-size:14.7px;line-height:19.1px;color:#fff;font-weight:bold;transform:scaleX(0.958);">Description</span>
<span class="t" style="left:1079.1px;transform-origin:50% 50%;top:659.1px;font-size:14.7px;line-height:19.1px;color:#fff;font-weight:bold;transform:scaleX(0.958);">Rate</span>
<span class="t" style="left:1533.0px;transform-origin:50% 50%;top:659.1px;font-size:14.7px;line-height:19.1px;color:#fff;font-weight:bold;transform:scaleX(0.968);">Comments</span>
<span class="t" style="left:168.6px;transform-origin:0 50%;top:681.8px;font-size:14.7px;line-height:19.1px;color:#303030;transform:scaleX(1.014);">100-61997</span>
<span class="t" style="left:372.5px;transform-origin:0 50%;top:681.8px;font-size:14.7px;line-height:19.1px;color:#303030;transform:scaleX(1.057);">Administration</span>
<span class="t" style="left:680.2px;transform-origin:100% 50%;top:681.8px;font-size:14.7px;line-height:19.1px;color:#303030;transform:scaleX(1.014);">61997</span>
<span class="t" style="left:725.5px;transform-origin:0 50%;top:681.8px;font-size:14.7px;line-height:19.1px;color:#303030;transform:scaleX(1.006);">Part Time Headcount Increase / Decrease by #</span>
<div class="b" style="left:1031.0px;top:679.2px;width:126.6px;height:23.4px;background:#ffffcc;border:1px solid #c5c5b9"></div>
<span class="t" style="left:1116.8px;transform-origin:100% 50%;top:681.8px;font-size:14.7px;line-height:19.1px;color:#303030;transform:scaleX(1.020);">(2.00)</span>
<div class="b" style="left:1299.0px;top:679.2px;width:443.0px;height:23.4px;background:#ffffcc;border:1px solid #c5c5b9"></div>
<span class="t" style="left:1301.3px;transform-origin:0 50%;top:681.8px;font-size:14.7px;line-height:19.1px;color:#303030;">Retired early</span>
<span class="t" style="left:168.6px;transform-origin:0 50%;top:704.2px;font-size:14.7px;line-height:19.1px;color:#303030;transform:scaleX(1.014);">200-61997</span>
<span class="t" style="left:372.5px;transform-origin:0 50%;top:704.2px;font-size:14.7px;line-height:19.1px;color:#303030;transform:scaleX(1.019);">Finance &amp; Accounting</span>
<span class="t" style="left:680.2px;transform-origin:100% 50%;top:704.2px;font-size:14.7px;line-height:19.1px;color:#303030;transform:scaleX(1.014);">61997</span>
<div class="b" style="left:1031.0px;top:701.6px;width:126.6px;height:23.4px;background:#ffffcc;border:1px solid #c5c5b9"></div>
<span class="t" style="left:725.5px;transform-origin:0 50%;top:704.2px;font-size:14.7px;line-height:19.1px;color:#303030;transform:scaleX(1.006);">Part Time Headcount Increase / Decrease by #</span>
<div class="b" style="left:1299.0px;top:701.6px;width:443.0px;height:23.4px;background:#ffffcc;border:1px solid #c5c5b9"></div>
<span class="t" style="left:168.6px;transform-origin:0 50%;top:726.6px;font-size:14.7px;line-height:19.1px;color:#303030;transform:scaleX(1.014);">300-61997</span>
<span class="t" style="left:372.5px;transform-origin:0 50%;top:726.6px;font-size:14.7px;line-height:19.1px;color:#303030;transform:scaleX(1.010);">Sales &amp; Marketing</span>
<span class="t" style="left:680.2px;transform-origin:100% 50%;top:726.6px;font-size:14.7px;line-height:19.1px;color:#303030;transform:scaleX(1.014);">61997</span>
<div class="b" style="left:1031.0px;top:724.0px;width:126.6px;height:23.4px;background:#ffffcc;border:1px solid #c5c5b9"></div>
<span class="t" style="left:725.5px;transform-origin:0 50%;top:726.6px;font-size:14.7px;line-height:19.1px;color:#303030;transform:scaleX(1.006);">Part Time Headcount Increase / Decrease by #</span>
<div class="b" style="left:1299.0px;top:724.0px;width:443.0px;height:23.4px;background:#ffffcc;border:1px solid #c5c5b9"></div>
<span class="t" style="left:168.6px;transform-origin:0 50%;top:749.0px;font-size:14.7px;line-height:19.1px;color:#303030;transform:scaleX(1.014);">400-61997</span>
<span class="t" style="left:372.5px;transform-origin:0 50%;top:749.0px;font-size:14.7px;line-height:19.1px;color:#303030;transform:scaleX(0.982);">Human Resources</span>
<span class="t" style="left:680.2px;transform-origin:100% 50%;top:749.0px;font-size:14.7px;line-height:19.1px;color:#303030;transform:scaleX(1.014);">61997</span>
<span class="t" style="left:725.5px;transform-origin:0 50%;top:749.0px;font-size:14.7px;line-height:19.1px;color:#303030;transform:scaleX(1.006);">Part Time Headcount Increase / Decrease by #</span>
<div class="b" style="left:1031.0px;top:746.4px;width:126.6px;height:23.4px;background:#ffffcc;border:1px solid #c5c5b9"></div>
<span class="t" style="left:1126.6px;transform-origin:100% 50%;top:749.0px;font-size:14.7px;line-height:19.1px;color:#303030;transform:scaleX(1.020);">1.00</span>
<div class="b" style="left:1299.0px;top:746.4px;width:443.0px;height:23.4px;background:#ffffcc;border:1px solid #c5c5b9"></div>
</div>
<div class="b" style="left:1741.8px;top:214.0px;width:23.2px;height:553.0px;background:#e3e3e3;border-left:1.2px solid #c2c2c2"></div>
<div class="b" style="left:1747.0px;top:215.0px;width:16.0px;height:15.5px;background:#fff;border:1px solid #cfcfcf"></div>
<svg style="left:1750px;top:219px" width="9" height="6" viewBox="0 0 9 6"><path d="M0.4 5.4 L4.5 0.8 L8.6 5.4Z" fill="#6e6e6e"/></svg>
<div class="b" style="left:1747.0px;top:237.5px;width:16.0px;height:151.0px;background:#fff;border:1px solid #c9c9c9"></div>
<div class="b" style="left:1747.0px;top:748.5px;width:16.0px;height:16.0px;background:#fff;border:1px solid #cfcfcf"></div>
<svg style="left:1750px;top:754px" width="9" height="6" viewBox="0 0 9 6"><path d="M0.4 0.6 L4.5 5.2 L8.6 0.6Z" fill="#7a7a7a"/></svg>
<div class="b" style="left:139.0px;top:765.2px;width:1626.0px;height:31.8px;background:#e9e9e9;border-top:1.3px solid #bdbdbd"></div>
<div class="b" style="left:249.8px;top:765.0px;width:120.2px;height:27.0px;background:#fff;border-left:1px solid #c4c4c4;border-right:1px solid #c4c4c4"></div>
<div class="b" style="left:249.8px;top:790.6px;width:120.2px;height:2.0px;background:#217346;"></div>
<svg style="left:168px;top:776px" width="8" height="10" viewBox="0 0 8 10"><path d="M6 1 L1.6 5 L6 9Z" fill="#c3c3c3"/></svg>
<svg style="left:199px;top:776px" width="8" height="10" viewBox="0 0 8 10"><path d="M2 1 L6.4 5 L2 9Z" fill="#c3c3c3"/></svg>
<span class="t" style="left:263.5px;transform-origin:50% 50%;top:769.5px;font-size:14.7px;line-height:19.1px;color:#1e7145;font-weight:bold;transform:scaleX(0.967);">Assumptions</span>
<span class="t" style="left:383.0px;transform-origin:50% 50%;top:769.5px;font-size:14.7px;line-height:19.1px;color:#5e5e5e;transform:scaleX(0.969);">Payroll</span>
<div class="b" style="left:445.0px;top:771.0px;width:1.0px;height:21.0px;background:#bdbdbd;"></div>
<span class="t" style="left:460.3px;transform-origin:50% 50%;top:769.5px;font-size:14.7px;line-height:19.1px;color:#5e5e5e;transform:scaleX(1.011);">Directions</span>
<div class="b" style="left:545.0px;top:771.0px;width:1.0px;height:21.0px;background:#bdbdbd;"></div>
<div class="b" style="left:1083.4px;top:776.2px;width:2.0px;height:2.0px;background:#a6a6a6;border-radius:1px"></div>
<div class="b" style="left:1083.4px;top:780.2px;width:2.0px;height:2.0px;background:#a6a6a6;border-radius:1px"></div>
<div class="b" style="left:1083.4px;top:784.2px;width:2.0px;height:2.0px;background:#a6a6a6;border-radius:1px"></div>
<div class="b" style="left:1100.0px;top:772.5px;width:642.0px;height:17.5px;background:#dedede;"></div>
<div class="b" style="left:1101.0px;top:773.0px;width:16.0px;height:16.5px;background:#fff;border:1px solid #c4c4c4"></div>
<svg style="left:1105px;top:777px" width="6" height="9" viewBox="0 0 6 9"><path d="M5.2 0.4 L0.8 4.5 L5.2 8.6Z" fill="#6e6e6e"/></svg>
<div class="b" style="left:1117.5px;top:773.0px;width:29.0px;height:16.5px;background:#fff;border:1px solid #d0d0d0"></div>
<div class="b" style="left:1725.0px;top:773.0px;width:16.5px;height:16.5px;background:#fff;border:1px solid #c4c4c4"></div>
<svg style="left:1731px;top:777px" width="6" height="9" viewBox="0 0 6 9"><path d="M0.8 0.4 L5.2 4.5 L0.8 8.6Z" fill="#808080"/></svg>
<div class="b" style="left:139.0px;top:796.0px;width:1626.0px;height:31.0px;background:#2e3643;"></div>
<span class="t" style="left:815.0px;transform-origin:0 50%;top:802.0px;font-size:17.6px;line-height:22.9px;color:#58626f;transform:scaleX(0.994);">Spreading and Line item details</span>
<svg style="left:1069px;top:805px" width="16" height="11" viewBox="0 0 16 11"><path d="M2 9 L8 3 L14 9" fill="none" stroke="#979ba2" stroke-width="2.6"/></svg>
<div id="frame"></div>
</div></body></html>
